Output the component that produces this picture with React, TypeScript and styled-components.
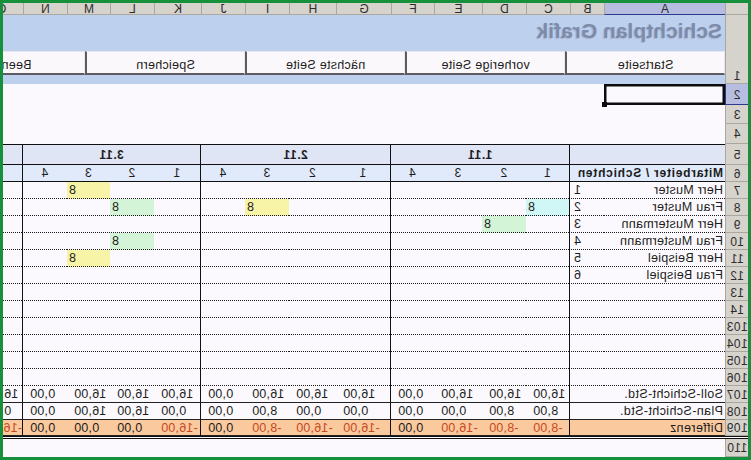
import React from "react";
import styled, { createGlobalStyle } from "styled-components";

const COLS = "23px 121px 34px 44px 44px 48px 43px 55px 47px 44px 44px 47px 44px 43px 44px 44px";
const COL_LETTERS = ["A", "B", "C", "D", "E", "F", "G", "H", "I", "J", "K", "L", "M", "N", "O"];
const BUTTONS = ["Startseite", "vorherige Seite", "nächste Seite", "Speichern", "Beenden"];
const GROUPS = ["1.11", "2.11", "3.11", ""];
const SHIFT_COLS = 13;

type Fill = "cyan" | "green" | "yellow";

const FILLS: Record<Fill, string> = {
  cyan: "#d0f6f5",
  green: "#d3f4d6",
  yellow: "#f7f4a8",
};

// index 0 is column C
const PEOPLE: { name: string; marks: Record<number, Fill> }[] = [
  { name: "Herr Muster", marks: { 10: "yellow" } },
  { name: "Frau Muster", marks: { 0: "cyan", 6: "yellow", 9: "green" } },
  { name: "Herr Mustermann", marks: { 1: "green" } },
  { name: "Frau Mustermann", marks: { 9: "green" } },
  { name: "Herr Beispiel", marks: { 10: "yellow" } },
  { name: "Frau Beispiel", marks: {} },
];

const SOLL = ["16,00", "16,00", "16,00", "0,00", "16,00", "16,00", "16,00", "0,00", "16,00", "16,00", "16,00", "0,00", "16,00"];
const PLAN = ["8,00", "8,00", "0,00", "0,00", "0,00", "0,00", "8,00", "0,00", "0,00", "16,00", "16,00", "0,00", "0,00"];
const DIFF = ["-8,00", "-8,00", "-16,00", "0,00", "-16,00", "-16,00", "-8,00", "0,00", "-16,00", "0,00", "0,00", "0,00", "-16,00"];

const GlobalStyle = createGlobalStyle`
  html, body {
    margin: 0;
    background: #fff;
    overflow: hidden;
  }
  body {
    font-family: "Liberation Sans", Arial, sans-serif;
    font-size: 12.5px;
    color: #1c1c1c;
  }
`;

// the reference is a mirrored picture, so the whole sheet is flipped
const Frame = styled.div`
  width: 751px;
  height: 460px;
  box-sizing: border-box;
  border: 3px solid #17903c;
  background: #fbf9fd;
  overflow: hidden;
  transform: scaleX(-1);
`;

const Row = styled.div<{ $h: number }>`
  display: grid;
  grid-template-columns: ${COLS};
  height: ${(p) => p.$h}px;
  width: 745px;
`;

const HeadCell = styled.div<{ $active?: boolean }>`
  box-sizing: border-box;
  background: ${(p) => (p.$active ? "#b7bde0" : "#d6d2cc")};
  border-right: 1px solid #aaa7a0;
  border-bottom: 1px solid ${(p) => (p.$active ? "#2b3a8c" : "#aaa7a0")};
  color: #2c2c2c;
  font-size: 12px;
  line-height: 12px;
  text-align: center;
  overflow: hidden;
  white-space: nowrap;
`;

const RowHead = styled(HeadCell)<{ $bottom?: boolean; $flat?: boolean }>`
  display: flex;
  align-items: ${(p) => (p.$bottom ? "flex-end" : "center")};
  justify-content: center;
  padding-bottom: ${(p) => (p.$bottom ? "1px" : "0")};
  padding-top: ${(p) => (p.$bottom || p.$flat ? "0" : "1px")};
  letter-spacing: 0.4px;
  ${(p) => (p.$active ? "border-right: 1px solid #2b3a8c;" : "")}
`;

const Banner = styled.div`
  grid-column: 2 / -1;
  background: #bdd0ee;
  overflow: hidden;
`;

const Title = styled.div`
  height: 36px;
  box-sizing: border-box;
  padding: 4px 0 0 3px;
  font-size: 21px;
  line-height: 24px;
  font-weight: bold;
  color: #7d8ba9;
  text-shadow: 1px 1px 1px #a9b6d0;
  white-space: nowrap;
`;

const ButtonBar = styled.div`
  display: flex;
  width: 800px;
`;

const SheetButton = styled.div`
  flex: 0 0 160px;
  height: 24px;
  box-sizing: border-box;
  padding-top: 4px;
  background: #fbf8fb;
  border-top: 1px solid #e6e6f0;
  border-left: 1px solid #e6e6f0;
  border-right: 2px solid #5c5c60;
  border-bottom: 2px solid #5c5c60;
  font-size: 12.5px;
  line-height: 18px;
  letter-spacing: 0.3px;
  text-align: center;
  white-space: nowrap;
`;

const SelectedCell = styled.div`
  position: relative;
  box-shadow: inset 0 0 0 2.5px #0c0c0c;
`;

const Handle = styled.span`
  position: absolute;
  right: -2px;
  bottom: -2px;
  width: 5px;
  height: 5px;
  background: #0c0c0c;
`;

const Band = styled.div<{ $tone?: "date" | "sub"; $edge?: boolean; $span?: number; $line?: boolean }>`
  box-sizing: border-box;
  grid-column: span ${(p) => p.$span ?? 1};
  background: ${(p) => (p.$tone === "date" ? "#dfe5f5" : "#e0eafa")};
  border-top: ${(p) => (p.$line ? "1px solid #111" : "none")};
  border-bottom: 1px solid #111;
  border-left: ${(p) => (p.$edge ? "1px solid #111" : "none")};
  text-align: center;
  font-size: 12px;
  line-height: 16px;
  overflow: hidden;
  white-space: nowrap;
`;

const DateLabel = styled(Band)`
  font-weight: bold;
  line-height: 21px;
  letter-spacing: 0.5px;
`;

const HeaderTitle = styled(Band)`
  font-weight: bold;
  text-align: left;
  padding-left: 2px;
  letter-spacing: 0.75px;
`;

const Cell = styled.div<{ $edge?: boolean; $fill?: Fill }>`
  box-sizing: border-box;
  background-color: ${(p) => (p.$fill ? FILLS[p.$fill] : "transparent")};
  background-image: repeating-linear-gradient(90deg, #1a1a1a 0 1px, transparent 1px 2px);
  background-size: 100% 1px;
  background-position: left bottom;
  background-repeat: no-repeat;
  border-left: ${(p) => (p.$edge ? "1px solid #111" : "none")};
  line-height: 16px;
  font-size: 12.5px;
  white-space: nowrap;
  overflow: hidden;
`;

const NameCell = styled(Cell)`
  padding-left: 2px;
  letter-spacing: 0.3px;
`;

const IndexCell = styled(Cell)`
  text-align: right;
  padding-right: 4px;
`;

const MarkCell = styled(Cell)`
  text-align: right;
  padding-right: 2px;
`;

const Total = styled(Cell)<{ $negative?: boolean; $diff?: boolean }>`
  background: ${(p) => (p.$diff ? "#fbc99e" : "transparent")};
  border-bottom: 1px solid #222;
  color: ${(p) => (p.$negative ? "#c8481c" : "#1c1c1c")};
  text-align: right;
  padding-right: 7px;
  letter-spacing: 0.2px;
`;

const TotalLabel = styled(Total)`
  grid-column: span 2;
  text-align: left;
  padding-left: 2px;
  padding-right: 0;
  letter-spacing: 0.4px;
`;

const DiffRow = styled(Row)`
  border-bottom: 3px double #111;
  box-sizing: content-box;
`;

function TotalRow({ head, label, values }: { head: string; label: string; values: string[] }) {
  const diff = label === "Differenz";
  const Wrap = diff ? DiffRow : Row;
  return (
    <Wrap $h={diff ? 16 : 17}>
      <RowHead>{head}</RowHead>
      <TotalLabel $diff={diff}>{label}</TotalLabel>
      {values.map((v, i) => (
        <Total key={i} $diff={diff} $edge={i % 4 === 0} $negative={v.startsWith("-")}>
          {v}
        </Total>
      ))}
    </Wrap>
  );
}

function EmptyRow({ head }: { head: string }) {
  return (
    <Row $h={17}>
      <RowHead>{head}</RowHead>
      <Cell />
      <Cell />
      {Array.from({ length: SHIFT_COLS }, (_, i) => (
        <Cell key={i} $edge={i % 4 === 0} />
      ))}
    </Row>
  );
}

export default function App() {
  return (
    <>
      <GlobalStyle />
      <Frame>
        <Row $h={12}>
          <HeadCell />
          {COL_LETTERS.map((c) => (
            <HeadCell key={c} $active={c === "A"}>{c}</HeadCell>
          ))}
        </Row>
        <Row $h={69}>
          <RowHead $bottom>1</RowHead>
          <Banner>
            <Title>Schichtplan Grafik</Title>
            <ButtonBar>
              {BUTTONS.map((b) => (
                <SheetButton key={b}>{b}</SheetButton>
              ))}
            </ButtonBar>
          </Banner>
        </Row>
        <Row $h={21}>
          <RowHead $active>2</RowHead>
          <SelectedCell>
            <Handle />
          </SelectedCell>
        </Row>
        <Row $h={19}>
          <RowHead>3</RowHead>
        </Row>
        <Row $h={20}>
          <RowHead>4</RowHead>
        </Row>
        <Row $h={21}>
          <RowHead>5</RowHead>
          <Band $tone="date" $span={2} $line />
          {GROUPS.map((g, i) => (
            <DateLabel key={i} $tone="date" $span={i === 3 ? 1 : 4} $edge $line>{g}</DateLabel>
          ))}
        </Row>
        <Row $h={17}>
          <RowHead>6</RowHead>
          <HeaderTitle $span={2}>Mitarbeiter / Schichten</HeaderTitle>
          {Array.from({ length: SHIFT_COLS }, (_, i) => (
            <Band key={i} $edge={i % 4 === 0}>{i < 12 ? (i % 4) + 1 : ""}</Band>
          ))}
        </Row>
        {PEOPLE.map((p, n) => (
          <Row $h={17} key={p.name}>
            <RowHead>{n + 7}</RowHead>
            <NameCell>{p.name}</NameCell>
            <IndexCell>{n + 1}</IndexCell>
            {Array.from({ length: SHIFT_COLS }, (_, i) => (
              <MarkCell key={i} $edge={i % 4 === 0} $fill={p.marks[i]}>
                {p.marks[i] ? "8" : ""}
              </MarkCell>
            ))}
          </Row>
        ))}
        {["13", "14", "103", "104", "105", "106"].map((h) => (
          <EmptyRow key={h} head={h} />
        ))}
        <TotalRow head="107" label="Soll-Schicht-Std." values={SOLL} />
        <TotalRow head="108" label="Plan-Schicht-Std." values={PLAN} />
        <TotalRow head="109" label="Differenz" values={DIFF} />
        <Row $h={18}>
          <RowHead $flat>110</RowHead>
        </Row>
      </Frame>
    </>
  );
}
